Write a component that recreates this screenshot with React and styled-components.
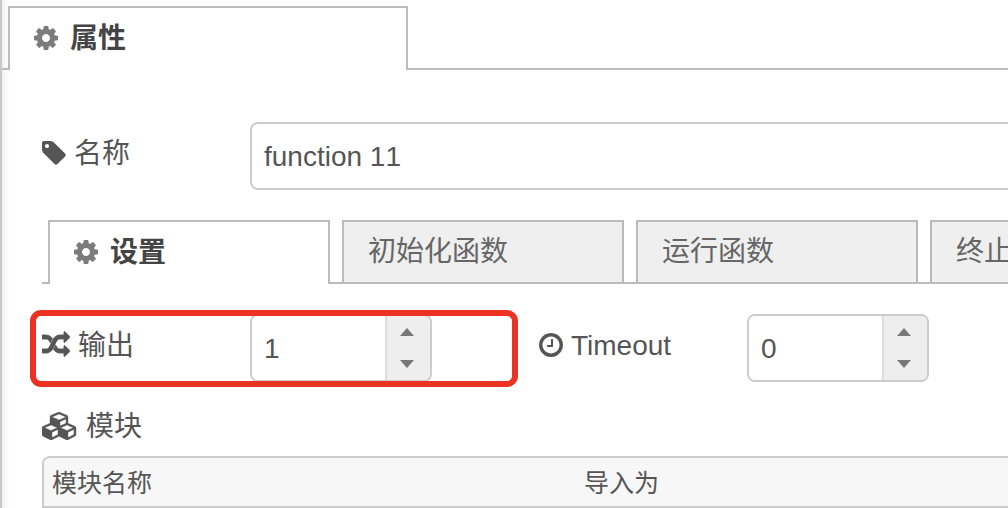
import React, { useState } from 'react';
import styled, { createGlobalStyle } from 'styled-components';

const GlobalStyle = createGlobalStyle`
  *, *::before, *::after { box-sizing: border-box; }
  body {
    margin: 0;
    background: #fff;
    color: #555;
    font-family: "Liberation Sans", "Noto Sans CJK SC", sans-serif;
    font-size: 28px;
    line-height: 28px;
  }
  button, input { font: inherit; color: inherit; }
`;

const ICONS = {
  cog: {
    box: '128 0 1536 1792',
    width: 24,
    d: 'M1152 896q0-106-75-181t-181-75-181 75-75 181 75 181 181 75 181-75 75-181zm512-109v222q0 12-8 23t-20 13l-185 28q-19 54-39 91 35 50 107 138 10 12 10 25t-9 23q-27 37-99 108t-94 71q-12 0-26-9l-138-108q-44 23-91 38-16 136-29 186-7 28-36 28h-222q-14 0-24.5-8.5t-11.5-21.5l-28-184q-49-16-90-37l-141 107q-10 9-25 9-14 0-25-11-126-114-165-168-7-10-7-23 0-12 8-23 15-21 51-66.5t54-70.5q-27-50-41-99l-183-27q-13-2-21-12.5t-8-23.5v-222q0-12 8-23t19-13l186-28q14-46 39-92-40-57-107-138-10-12-10-24 0-10 9-23 26-36 98.5-107.5t94.5-71.5q13 0 26 10l138 107q44-23 91-38 16-136 29-186 7-28 36-28h222q14 0 24.5 8.5t11.5 21.5l28 184q49 16 90 37l142-107q9-9 24-9 13 0 25 10 129 119 165 170 7 8 7 22 0 12-8 23-15 21-51 66.5t-54 70.5q26 50 41 98l183 28q13 2 21 12.5t8 23.5z',
  },
  tag: {
    box: '128 0 1536 1792',
    width: 24,
    d: 'M576 448q0-53-37.5-90.5t-90.5-37.5-90.5 37.5-37.5 90.5 37.5 90.5 90.5 37.5 90.5-37.5 37.5-90.5zm1067 576q0 53-37 90l-491 492q-39 37-91 37-53 0-90-37l-715-716q-38-37-64.5-101t-26.5-117v-416q0-52 38-90t90-38h416q53 0 117 26.5t102 64.5l715 714q37 39 37 91z',
  },
  random: {
    box: '0 0 1792 1792',
    width: 28,
    stroke: 56,
    d: 'M666 481q-60 92-137 273-22-45-37-72.5t-40.5-63.5-51-56.5-63-35-81.5-14.5h-224q-14 0-23-9t-9-23v-192q0-14 9-23t23-9h224q250 0 410 225zm1126 799q0 14-9 23l-320 320q-9 9-23 9-13 0-22.5-9.5t-9.5-22.5v-192q-32 0-85 .5t-81 1-73-1-71-5-64-10.5-63-18.5-58-28.5-59-40-55-53.5-56-69.5q59-93 136-273 22 45 37 72.5t40.5 63.5 51 56.5 63 35 81.5 14.5h256v-192q0-14 9-23t23-9q12 0 24 10l319 319q9 9 9 23zm0-896q0 14-9 23l-320 320q-9 9-23 9-13 0-22.5-9.5t-9.5-22.5v-192h-256q-48 0-87 15t-69 45-51 61.5-45 77.5q-32 62-78 171-29 66-49.5 111t-54 105-64 100-74 83-90 68.5-106.5 42-128 16.5h-224q-14 0-23-9t-9-23v-192q0-14 9-23t23-9h224q48 0 87-15t69-45 51-61.5 45-77.5q32-62 78-171 29-66 49.5-111t54-105 64-100 74-83 90-68.5 106.5-42 128-16.5h256v-192q0-14 9-23t23-9q12 0 24 10l319 319q9 9 9 23z',
  },
  clock: {
    box: '128 0 1536 1792',
    width: 24,
    d: 'M1024 544v448q0 14-9 23t-23 9h-320q-14 0-23-9t-9-23v-64q0-14 9-23t23-9h224v-352q0-14 9-23t23-9h64q14 0 23 9t9 23zm416 352q0-148-73-273t-198-198-273-73-273 73-198 198-73 273 73 273 198 198 273 73 273-73 198-198 73-273zm224 0q0 209-103 385.5t-279.5 279.5-385.5 103-385.5-103-279.5-279.5-103-385.5 103-385.5 279.5-279.5 385.5-103 385.5 103 279.5 279.5 103 385.5z',
  },
  cubes: {
    box: '0 0 2304 1792',
    width: 36,
    stroke: 24,
    d: 'M640 1632l384-192v-314l-384 164v342zm-64-454l404-173-404-173-404 173zm1088 454l384-192v-314l-384 164v342zm-64-454l404-173-404-173-404 173zm-448-293l384-165v-266l-384 164v267zm-64-379l441-189-441-189-441 189zm1088 518v416q0 36-19 67t-52 47l-448 224q-25 14-57 14t-57-14l-448-224q-4-2-7-4-2 2-7 4l-448 224q-25 14-57 14t-57-14l-448-224q-33-16-52-47t-19-67v-416q0-38 21.5-70t56.5-48l434-186v-400q0-38 21.5-70t56.5-48l448-192q23-10 50-10t50 10l448 192q35 16 56.5 48t21.5 70v400l434 186q36 16 57 48t21 70z',
  },
};

const IconSvg = styled.svg`
  flex: none;
  height: 28px;
  fill: currentColor;
  stroke: currentColor;
`;

function Icon({ name }) {
  const icon = ICONS[name];
  return (
    <IconSvg viewBox={icon.box} width={icon.width} height="28" aria-hidden="true">
      <path d={icon.d} strokeWidth={icon.stroke || 0} />
    </IconSvg>
  );
}

const Panel = styled.main`
  min-height: 100vh;
  padding-top: 6px;
  overflow: hidden;
  border-left: 2px solid #c8c8c8;
  background: linear-gradient(to right, #f2f2f2, #fff 8px);
`;

const TabBar = styled.div`
  display: flex;
  gap: 12px;
  height: 64px;
  padding-left: 6px;
  border-bottom: 2px solid #bbb;
`;

const Tab = styled.button`
  display: flex;
  flex: none;
  align-items: center;
  gap: 12px;
  width: ${(p) => (p.$wide ? '400px' : '282px')};
  height: ${(p) => (p.$active ? '64px' : '62px')};
  padding: 0 24px;
  border: 2px solid #bbb;
  border-bottom: 0;
  background: ${(p) => (p.$active ? '#fff' : '#efefef')};
  color: ${(p) => (p.$active ? '#444' : '#666')};
  font-weight: ${(p) => (p.$active ? 700 : 400)};
  white-space: nowrap;

  svg {
    margin-bottom: 3px;
    color: #7c7c7c;
  }
`;

const Form = styled.form`
  padding: 52px 0 0 40px;
`;

const Row = styled.div`
  display: flex;
  align-items: center;
  margin-bottom: 30px;
`;

const Label = styled.label`
  display: flex;
  flex: none;
  align-items: center;
  gap: 8px;
  width: 208px;
  padding-bottom: 6px;
`;

const Caption = styled.span`
  padding-top: 2px;
`;

const TextInput = styled.input`
  flex: 1;
  min-width: 0;
  height: 68px;
  margin-right: -16px;
  padding: 2px 12px 0;
  border: 2px solid #ccc;
  border-radius: 8px;
  background: #fff;
  font-kerning: none;
`;

const FormTabs = styled(TabBar)`
  margin-bottom: 30px;
`;

const Field = styled.div`
  position: relative;
  display: flex;
  align-items: center;
  width: 497px;
`;

const Highlight = styled.span`
  position: absolute;
  inset: -4px 21px -5px -12px;
  border: 6px solid #ec3323;
  border-radius: 11px;
  pointer-events: none;
`;

const SpinnerBox = styled.div`
  display: flex;
  width: 182px;
  height: 68px;
  overflow: hidden;
  border: 2px solid #ccc;
  border-radius: 8px;
`;

const NumberInput = styled.input`
  flex: 1;
  min-width: 0;
  padding: 2px 12px 0;
  border: 0;
  background: #fff;
  appearance: textfield;

  &::-webkit-inner-spin-button { display: none; }
`;

const Steps = styled.div`
  display: flex;
  flex-direction: column;
  width: 45px;
  padding-right: 3px;
  border-left: 2px solid #ddd;
  background: #eee;
`;

const Step = styled.button`
  display: flex;
  flex: 1;
  align-items: center;
  justify-content: center;
  padding: 0;
  border: 0;
  background: transparent;
  color: #777;
`;

const Heading = styled.h2`
  display: flex;
  align-items: center;
  gap: 8px;
  height: 28px;
  margin: 0 0 16px;
  font-size: 28px;
  font-weight: 400;
`;

const TableFrame = styled.div`
  margin-right: -16px;
  overflow: hidden;
  border: 2px solid #ccc;
  border-radius: 8px 8px 0 0;
`;

const Table = styled.table`
  width: 100%;
  border-collapse: collapse;
  background: #f7f7f7;
  table-layout: fixed;
`;

const HeadCell = styled.th`
  width: ${(p) => (p.$first ? '532px' : 'auto')};
  height: 48px;
  padding: 2px 8px 0;
  font-size: 25px;
  font-weight: 400;
  text-align: left;
`;

function Spinner({ id, initial }) {
  const [value, setValue] = useState(initial);
  return (
    <SpinnerBox>
      <NumberInput
        id={id}
        type="number"
        min="0"
        value={value}
        onChange={(e) => setValue(Number(e.target.value))}
      />
      <Steps>
        <Step type="button" aria-label="+" onClick={() => setValue(value + 1)}>
          <svg width="16" height="10" viewBox="0 0 16 10" aria-hidden="true">
            <path d="M8 1L15 9H1z" fill="currentColor" />
          </svg>
        </Step>
        <Step type="button" aria-label="-" onClick={() => setValue(Math.max(0, value - 1))}>
          <svg width="16" height="10" viewBox="0 0 16 10" aria-hidden="true">
            <path d="M8 9L15 1H1z" fill="currentColor" />
          </svg>
        </Step>
      </Steps>
    </SpinnerBox>
  );
}

const FORM_TABS = ['设置', '初始化函数', '运行函数', '终止函数'];

export default function App() {
  const [active, setActive] = useState(0);
  return (
    <>
      <GlobalStyle />
      <Panel>
        <TabBar role="tablist">
          <Tab type="button" role="tab" aria-selected="true" $active $wide>
            <Icon name="cog" />
            属性
          </Tab>
        </TabBar>
        <Form onSubmit={(e) => e.preventDefault()}>
          <Row>
            <Label htmlFor="node-name">
              <Icon name="tag" />
              <Caption>名称</Caption>
            </Label>
            <TextInput id="node-name" type="text" defaultValue="function 11" />
          </Row>
          <FormTabs role="tablist">
            {FORM_TABS.map((text, i) => (
              <Tab
                key={text}
                type="button"
                role="tab"
                aria-selected={i === active}
                $active={i === active}
                onClick={() => setActive(i)}
              >
                {i === 0 && <Icon name="cog" />}
                {text}
              </Tab>
            ))}
          </FormTabs>
          <Row>
            <Field>
              <Label htmlFor="node-outputs">
                <Icon name="random" />
                <Caption>输出</Caption>
              </Label>
              <Spinner id="node-outputs" initial={1} />
              <Highlight />
            </Field>
            <Label htmlFor="node-timeout">
              <Icon name="clock" />
              <Caption>Timeout</Caption>
            </Label>
            <Spinner id="node-timeout" initial={0} />
          </Row>
          <Heading>
            <Icon name="cubes" />
            <Caption>模块</Caption>
          </Heading>
          <TableFrame>
            <Table>
              <thead>
                <tr>
                  <HeadCell scope="col" $first>模块名称</HeadCell>
                  <HeadCell scope="col">导入为</HeadCell>
                </tr>
              </thead>
            </Table>
          </TableFrame>
        </Form>
      </Panel>
    </>
  );
}
